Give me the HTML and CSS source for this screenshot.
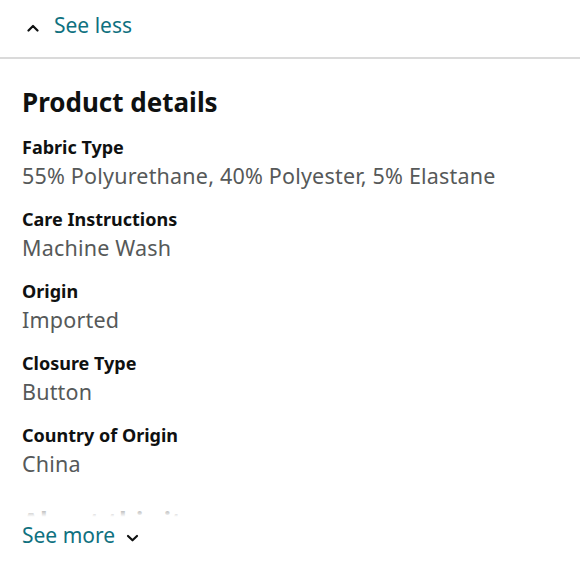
FILE: index.html
```html
<!DOCTYPE html>
<html>
<head>
<meta charset="utf-8">
<link rel="stylesheet" href="styles.css">
</head>
<body>
<div class="toggle-top">
  <svg class="chev" width="12" height="8" viewBox="0 0 12 8"><polyline points="1.5,6.5 6,2 10.5,6.5" fill="none" stroke="#0f1111" stroke-width="2.2" stroke-linecap="round" stroke-linejoin="round"/></svg>
  <span class="link">See less</span>
</div>
<div class="section">
  <div class="clip">
    <h2 class="heading">Product details</h2>
    <div class="item"><div class="label">Fabric Type</div><div class="value">55% Polyurethane, 40% Polyester, 5% Elastane</div></div>
    <div class="item"><div class="label">Care Instructions</div><div class="value">Machine Wash</div></div>
    <div class="item"><div class="label">Origin</div><div class="value">Imported</div></div>
    <div class="item"><div class="label">Closure Type</div><div class="value">Button</div></div>
    <div class="item"><div class="label">Country of Origin</div><div class="value">China</div></div>
    <h2 class="heading about">About this item</h2>
  </div>
  <div class="toggle-bottom">
    <span class="link">See more</span>
    <svg class="chev-down" width="13" height="8" viewBox="0 0 13 8"><polyline points="2,2 6.5,6.3 11,2" fill="none" stroke="#0f1111" stroke-width="2.2" stroke-linecap="round" stroke-linejoin="round"/></svg>
  </div>
</div>
</body>
</html>
```

FILE: styles.css
```css
html, body {
  margin: 0;
  padding: 0;
  background: #ffffff;
}
body {
  font-family: "Noto Sans", "Open Sans", sans-serif;
  color: #0f1111;
}
.toggle-top {
  height: 57px;
  display: flex;
  align-items: center;
  padding-left: 27px;
  border-bottom: 2px solid #dadada;
  box-sizing: content-box;
}
.chev {
  display: block;
  margin-right: 15px;
  margin-top: -1px;
}
.link {
  color: #0f7180;
  font-size: 21px;
  line-height: 28px;
}
.toggle-top .link {
  margin-top: -7px;
}
.section {
  padding: 0 22px;
}
.clip {
  position: relative;
  height: 462px;
  overflow: hidden;
}
.clip::after {
  content: "";
  position: absolute;
  left: 0;
  right: 0;
  bottom: 0;
  height: 14px;
  background: linear-gradient(to bottom, rgba(255,255,255,0.55), #ffffff 70%);
}
.heading {
  margin: 27px 0 0 0;
  font-size: 26px;
  line-height: 32px;
  font-weight: 700;
}
.item {
  margin-top: 17px;
}
.item + .item {
  margin-top: 17px;
}
.label {
  font-size: 18px;
  line-height: 24px;
  font-weight: 700;
}
.value {
  margin-top: 3px;
  font-size: 21.5px;
  line-height: 28px;
  letter-spacing: 0.2px;
  color: #565959;
}
.about {
  margin-top: 28px;
}
.toggle-bottom {
  display: flex;
  align-items: center;
}
.chev-down {
  display: block;
  margin-left: 11px;
  margin-top: 5px;
}
```
